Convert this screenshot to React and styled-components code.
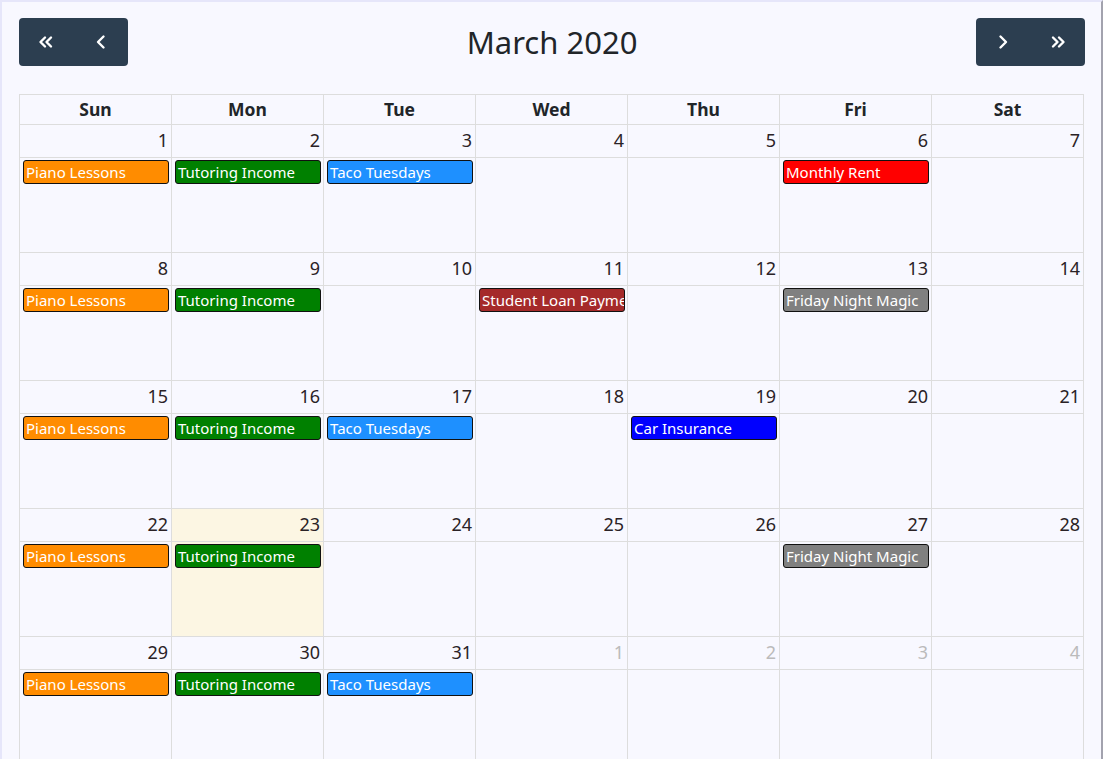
import styled, { createGlobalStyle } from "styled-components";

const GlobalStyle = createGlobalStyle`
  *, *::before, *::after {
    box-sizing: border-box;
  }
  html, body {
    margin: 0;
    padding: 0;
    background: #f8f8ff;
    font-family: "Noto Sans", "Open Sans", sans-serif;
  }
`;

const weeks = [
  [1, 2, 3, 4, 5, 6, 7],
  [8, 9, 10, 11, 12, 13, 14],
  [15, 16, 17, 18, 19, 20, 21],
  [22, 23, 24, 25, 26, 27, 28],
  [29, 30, 31, 1, 2, 3, 4],
];

const events = {
  1: { title: "Piano Lessons", color: "#ff8c00" },
  2: { title: "Tutoring Income", color: "#008000" },
  3: { title: "Taco Tuesdays", color: "#1e90ff" },
  6: { title: "Monthly Rent", color: "#ff0000" },
  8: { title: "Piano Lessons", color: "#ff8c00" },
  9: { title: "Tutoring Income", color: "#008000" },
  11: { title: "Student Loan Payment", color: "#a52a2a" },
  13: { title: "Friday Night Magic", color: "#808080" },
  15: { title: "Piano Lessons", color: "#ff8c00" },
  16: { title: "Tutoring Income", color: "#008000" },
  17: { title: "Taco Tuesdays", color: "#1e90ff" },
  19: { title: "Car Insurance", color: "#0000ff" },
  22: { title: "Piano Lessons", color: "#ff8c00" },
  23: { title: "Tutoring Income", color: "#008000" },
  27: { title: "Friday Night Magic", color: "#808080" },
  29: { title: "Piano Lessons", color: "#ff8c00" },
  30: { title: "Tutoring Income", color: "#008000" },
  31: { title: "Taco Tuesdays", color: "#1e90ff" },
};

const dayNames = ["Sun", "Mon", "Tue", "Wed", "Thu", "Fri", "Sat"];

function Chevron({ dir = "left", double = false }) {
  const flip = dir === "right" ? "scale(-1,1) translate(-16,0)" : undefined;
  return (
    <svg width="16" height="16" viewBox="0 0 16 16">
      <g transform={flip} fill="none" stroke="#fff" strokeWidth="2.4" strokeLinecap="round" strokeLinejoin="round">
        {double ? (
          <>
            <polyline points="7,3.5 2.5,8 7,12.5" />
            <polyline points="13,3.5 8.5,8 13,12.5" />
          </>
        ) : (
          <polyline points="10.5,2.5 5,8 10.5,13.5" />
        )}
      </g>
    </svg>
  );
}

export default function App() {
  return (
    <>
      <GlobalStyle />
      <Page>
        <Toolbar>
          <ButtonGroup>
            <NavButton aria-label="prev year">
              <Chevron dir="left" double />
            </NavButton>
            <NavButton aria-label="prev">
              <Chevron dir="left" />
            </NavButton>
          </ButtonGroup>
          <Title>March 2020</Title>
          <ButtonGroup $end>
            <NavButton aria-label="next">
              <Chevron dir="right" />
            </NavButton>
            <NavButton aria-label="next year">
              <Chevron dir="right" double />
            </NavButton>
          </ButtonGroup>
        </Toolbar>
        <Grid>
          {dayNames.map((d) => (
            <HeadCell key={d}>{d}</HeadCell>
          ))}
          {weeks.map((week, wi) =>
            week.map((day, di) => {
              const other = wi === 4 && di > 2;
              const ev = other ? null : events[day];
              return (
                <DayCell key={`${wi}-${di}`} $today={!other && day === 23}>
                  <DayNumber $other={other}>{day}</DayNumber>
                  <EventArea>
                    {ev && <Event $color={ev.color}>{ev.title}</Event>}
                  </EventArea>
                </DayCell>
              );
            })
          )}
        </Grid>
      </Page>
    </>
  );
}

const Page = styled.div`
  border-top: 2px solid #e6e6fa;
  border-left: 2px solid #e6e6fa;
  border-right: 2px solid #a2a2ae;
  padding: 16px 17px 0 17px;
  min-height: 759px;
  background: #f8f8ff;
`;

const Toolbar = styled.div`
  display: flex;
  align-items: center;
  justify-content: space-between;
  margin-bottom: 28px;
`;

const ButtonGroup = styled.div`
  display: flex;
  background: #2c3e50;
  border-radius: 4px;
  height: 48px;
  overflow: hidden;
  margin-right: ${(p) => (p.$end ? "-1px" : "0")};
`;

const NavButton = styled.button`
  width: 54.5px;
  height: 48px;
  border: none;
  background: transparent;
  display: flex;
  align-items: center;
  justify-content: center;
  padding: 0;
  cursor: pointer;
`;

const Title = styled.h2`
  margin: 0;
  font-size: 31px;
  font-weight: 400;
  color: #212529;
`;

const Grid = styled.div`
  display: grid;
  grid-template-columns: repeat(7, 1fr);
  border-top: 1px solid #ddd;
  border-left: 1px solid #ddd;
`;

const HeadCell = styled.div`
  height: 30px;
  border-right: 1px solid #ddd;
  border-bottom: 1px solid #ddd;
  display: flex;
  align-items: center;
  justify-content: center;
  padding-bottom: 2px;
  font-weight: 700;
  font-size: 17.5px;
  color: #212529;
`;

const DayCell = styled.div`
  display: flex;
  flex-direction: column;
  border-right: 1px solid #ddd;
  border-bottom: 1px solid #ddd;
  background: ${(p) => (p.$today ? "#fcf6e3" : "transparent")};
  min-width: 0;
`;

const DayNumber = styled.div`
  height: 33px;
  border-bottom: 1px solid #ddd;
  display: flex;
  align-items: center;
  justify-content: flex-end;
  padding-right: 3px;
  padding-bottom: 2px;
  font-size: 18px;
  color: ${(p) => (p.$other ? "#bbb" : "#2a2226")};
`;

const EventArea = styled.div`
  height: 94px;
  padding: 2px 2px 0 3px;
  min-width: 0;
`;

const Event = styled.div`
  height: 24px;
  line-height: 23px;
  border: 1px solid #111;
  border-radius: 3px;
  background: ${(p) => p.$color};
  color: #fff;
  font-size: 15px;
  padding-left: 2px;
  white-space: nowrap;
  overflow: hidden;
`;
